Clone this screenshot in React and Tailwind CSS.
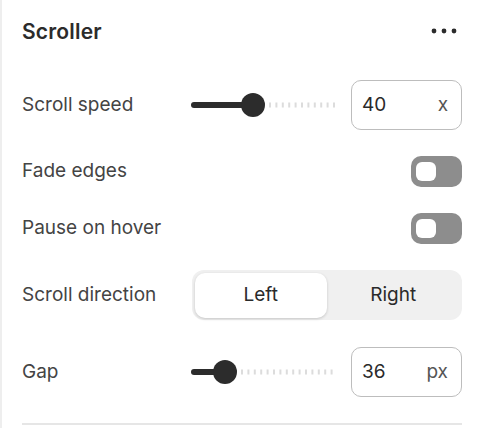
import React from 'react';

const font = { fontFamily: 'Inter, "Noto Sans", sans-serif' };

// スライダーの描画（塗り部分・つまみ・目盛り）
function Slider({ value }) {
  return (
    <svg width="147" height="26" viewBox="0 0 147 26" className="block shrink-0">
      <line x1={value + 16} y1="13" x2="144" y2="13" stroke="#dcdcdc" strokeWidth="5" strokeDasharray="2 4.4" />
      <line x1="3" y1="13" x2={value} y2="13" stroke="#2c2c2c" strokeWidth="6" strokeLinecap="round" />
      <circle cx={value} cy="13" r="12" fill="#2c2c2c" />
    </svg>
  );
}

function NumberBox({ value, unit }) {
  return (
    <div className="ml-auto w-[111px] h-[50px] border border-[#bdbdbd] rounded-[10px] flex items-center justify-between pl-[10px] pr-[13px] text-[19px] text-[#2a2a2a]">
      <span>{value}</span>
      <span className="text-[#555]">{unit}</span>
    </div>
  );
}

function Toggle() {
  return (
    <div className="ml-auto w-[51px] h-[31px] rounded-[10px] bg-[#8d8d8d] flex items-center pl-[5px]">
      <div className="w-[20px] h-[19px] rounded-[6px] bg-white"></div>
    </div>
  );
}

export default function App() {
  return (
    <div style={font} className="w-[482px] h-[428px] bg-white border-l-2 border-[#eeeeee] pl-[20px] pr-[20px] overflow-hidden flex flex-col">
      {/* ヘッダー */}
      <div className="h-[62px] flex items-center justify-between">
        <h1 className="text-[21px] font-semibold text-[#2b2b2b] tracking-[0.2px] pt-[1px]">Scroller</h1>
        <svg width="26" height="6" viewBox="0 0 26 6" className="mr-[5px]">
          <circle cx="3" cy="3" r="2.4" fill="#2b2b2b" />
          <circle cx="13" cy="3" r="2.4" fill="#2b2b2b" />
          <circle cx="23" cy="3" r="2.4" fill="#2b2b2b" />
        </svg>
      </div>

      <div className="mt-[18px] h-[50px] flex items-center text-[19px] text-[#444]">
        <span className="w-[169px]">Scroll speed</span>
        <Slider value={62} />
        <NumberBox value="40" unit="x" />
      </div>

      <div className="mt-[25px] h-[32px] flex items-center text-[19px] text-[#444]">
        <span>Fade edges</span>
        <Toggle />
      </div>

      <div className="mt-[25px] h-[32px] flex items-center text-[19px] text-[#444]">
        <span>Pause on hover</span>
        <Toggle />
      </div>

      <div className="mt-[26px] h-[50px] flex items-center text-[19px] text-[#444]">
        <span className="w-[170px]">Scroll direction</span>
        <div className="flex-1 h-[50px] rounded-[12px] bg-[#f0f0f0] p-[2.5px] flex">
          <div className="flex-1 rounded-[10px] bg-white shadow-[0_1px_3px_rgba(0,0,0,0.18)] flex items-center justify-center text-[#2a2a2a]">Left</div>
          <div className="flex-1 flex items-center justify-center text-[#2a2a2a]">Right</div>
        </div>
      </div>

      <div className="mt-[27px] h-[50px] flex items-center text-[19px] text-[#444]">
        <span className="w-[169px]">Gap</span>
        <Slider value={34} />
        <NumberBox value="36" unit="px" />
      </div>

      <div className="mt-[26px] h-[2px] bg-[#e6e6e6]"></div>
    </div>
  );
}
